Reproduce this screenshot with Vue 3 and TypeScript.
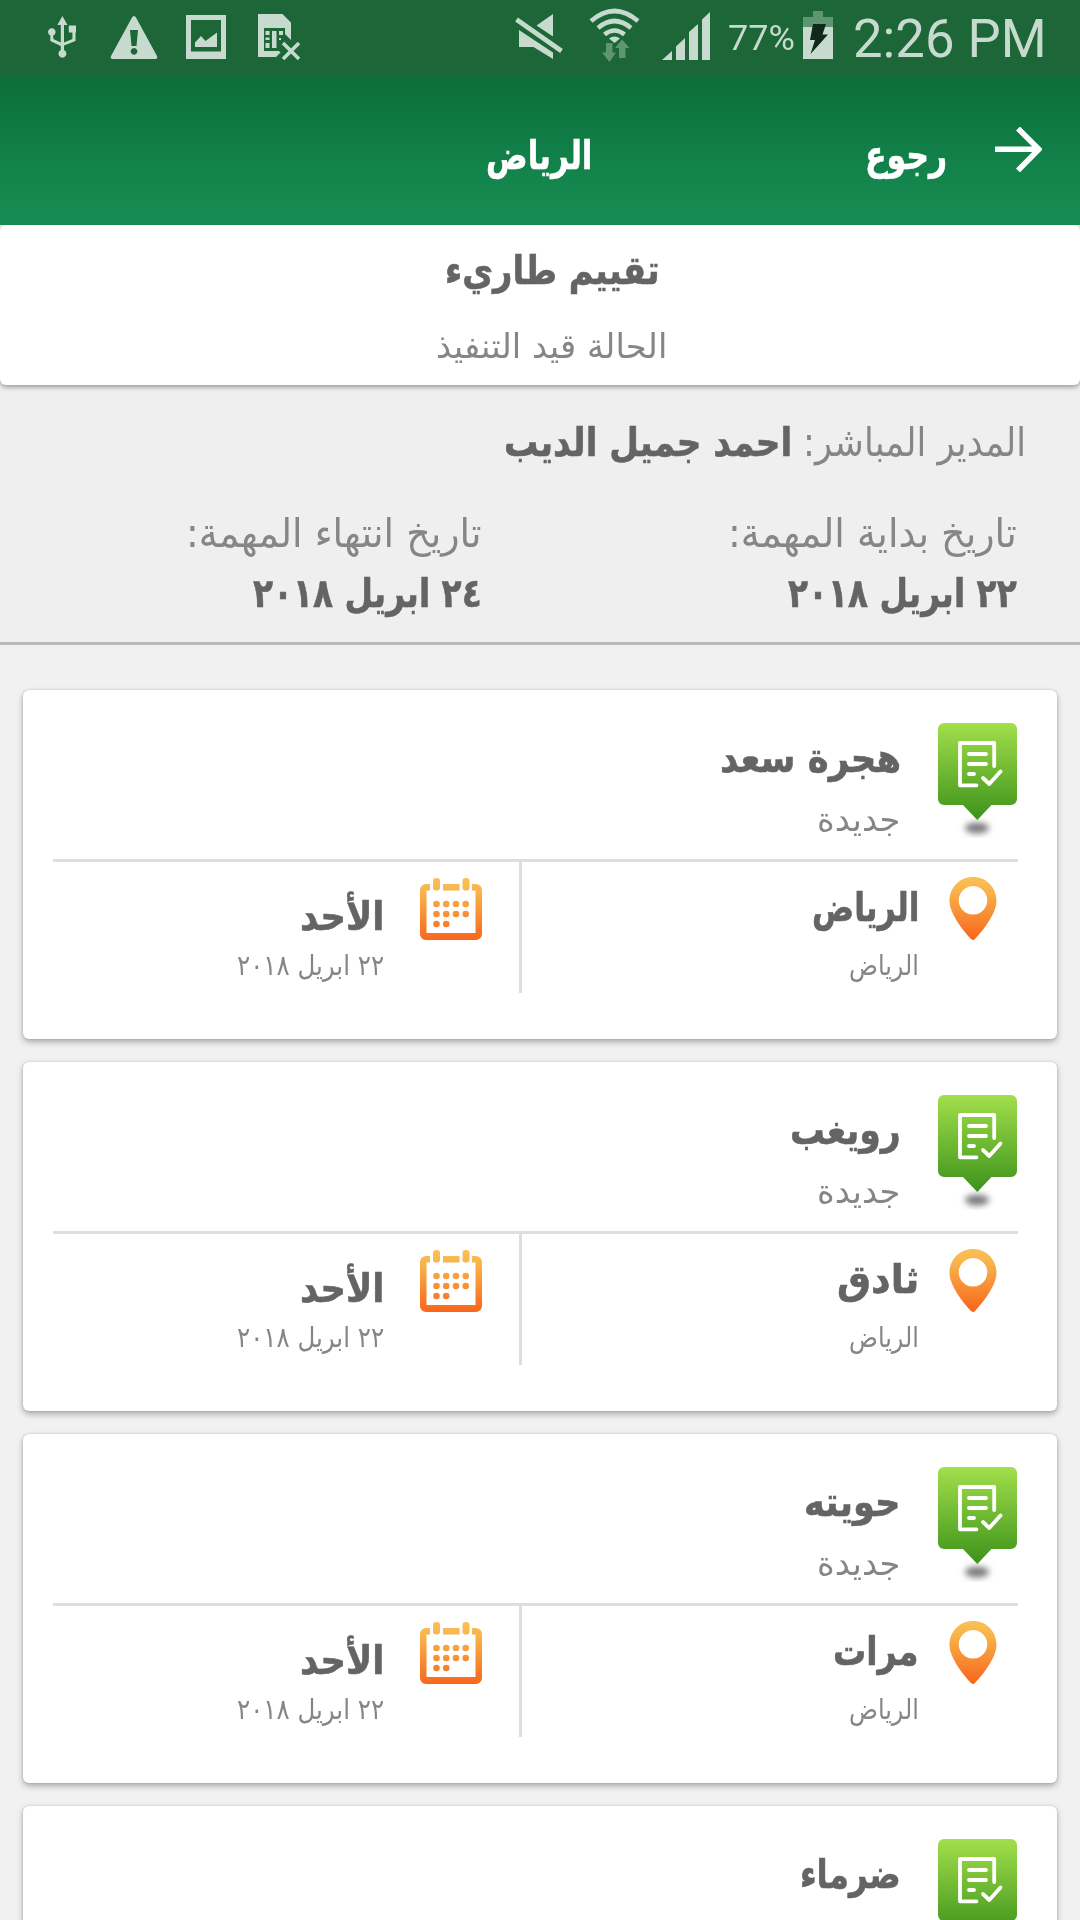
<script setup lang="ts">
import { defineComponent, h, onMounted, ref } from 'vue'

// Single line of text, condensed or widened to a given width.
const FitText = defineComponent({
  props: {
    text: { type: String, required: true },
    width: { type: Number, required: true },
    ltr: { type: Boolean, default: false },
  },
  setup(props) {
    const inner = ref<HTMLElement | null>(null)
    const scale = ref(1)
    onMounted(() => {
      if (inner.value) scale.value = props.width / inner.value.offsetWidth
    })
    return () =>
      h('span', { style: { display: 'block', flex: 'none', width: `${props.width}px`, whiteSpace: 'nowrap' } }, [
        h(
          'span',
          {
            ref: inner,
            style: {
              display: 'inline-block',
              transform: `scaleX(${scale.value})`,
              transformOrigin: props.ltr ? 'left' : 'right',
            },
          },
          props.text,
        ),
      ])
  },
})

interface Visit {
  name: string
  nameWidth: number
  details?: { state: string; city: string; cityWidth: number; region: string; day: string; date: string }
}

const common = { state: 'جديدة', region: 'الرياض', day: 'الأحد', date: '٢٢ ابريل ٢٠١٨' }

const visits: Visit[] = [
  { name: 'هجرة سعد', nameWidth: 181, details: { ...common, city: 'الرياض', cityWidth: 107 } },
  { name: 'رويغب', nameWidth: 111, details: { ...common, city: 'ثادق', cityWidth: 82 } },
  { name: 'حويته', nameWidth: 97, details: { ...common, city: 'مرات', cityWidth: 86 } },
  { name: 'ضرماء', nameWidth: 101 },
]

const dots = [
  [16.5, 26], [26.2, 26], [36, 26], [45.7, 26],
  [16.5, 36], [26.2, 36], [36, 36], [45.7, 36],
  [16.5, 46], [26.2, 46],
]
</script>

<template>
  <div class="screen">
    <svg width="0" height="0" class="defs">
      <defs>
        <linearGradient id="green" x1="0" y1="0" x2="0" y2="1">
          <stop offset="0" stop-color="#a2df4b" />
          <stop offset="1" stop-color="#3d921b" />
        </linearGradient>
        <linearGradient id="orange" gradientUnits="userSpaceOnUse" x1="0" y1="0" x2="0" y2="62">
          <stop offset="0" stop-color="#fac158" />
          <stop offset="0.25" stop-color="#f9b149" />
          <stop offset="1" stop-color="#f8661c" />
        </linearGradient>
        <filter id="soft" x="-50%" y="-100%" width="200%" height="300%">
          <feGaussianBlur stdDeviation="3" />
        </filter>
      </defs>
    </svg>

    <div class="status" dir="ltr">
      <svg width="310" height="76" viewBox="0 0 310 76" fill="#c6dacd">
        <path d="M62.4 16l-5 9h3.4v17.5l-7.5-3.500V35.500a3.800 3.800 0 1 0-3 0V41l10.500 5v4a4 4 0 1 0 3.200 0v-4.500L75.500 41V32.500H76V25.500h-7.200v7h3.600V39L64 42.500V25h3.500z" />
        <path fill-rule="evenodd" d="M134 16q1.200 0 2 1.500L157 56q1 3-1.500 3h-43q-2.500 0-1.500-3L132 17.500q.8-1.500 2-1.500zM130 30l1.500 16h5L138 30zM134 48a3.400 3.400 0 1 0 .01 0z" />
        <path fill-rule="evenodd" d="M186 15h40v44h-40zM191 20v31.500h30V20z" />
        <path d="M195 47v-4.500l6-6.500 4.500 5L217 32.500V47z" />
        <path fill-rule="evenodd" d="M258 14h24.500l8.500 8.500V40l-6-6V28h-21v23h15l1.500 1.500-4.500 4.500H258z" />
        <path d="M265.500 31h4v4h-4zM272 31h4.500v17H272zM279 31h4v4h-4zM265.500 37.500h4v2.500h-4zM265.500 43h4v5h-4zM279 38h2v2h-2z" />
        <path d="M283 43l16 16M299 43l-16 16" stroke="#c6dacd" stroke-width="3.600" fill="none" />
      </svg>
      <svg class="signals" width="200" height="76" viewBox="514 0 200 76" fill="#c6dacd">
        <path d="M553 14v22.500l-16.500-11zM519 30l34 22.500V59L533.500 47H519z" />
        <path d="M516.500 19.500L561.500 51" stroke="#c6dacd" stroke-width="4.800" fill="none" />
        <g fill="none" stroke="#c6dacd" stroke-width="4.600">
          <path d="M591 21q23.500-20 47 0" />
          <path d="M598 28q16.500-14 33 0" />
          <path d="M604.500 34.500q10-8 20 0" />
        </g>
        <path d="M609 38.500q5.500-4 11 0l-5.500 4.500z" />
        <path fill="#5f9672" d="M606 43h6.500v9.500h3.500L609.500 62 602 52.500h4zM619 58h6.500V48h4L622 39.500 615 48h4z" />
        <path d="M662 60l10-9v9zM676 60V46.500l9-8.500v22zM689 60V32l9-8v36zM702 60V19.500l8-7.500v48z" />
      </svg>
      <FitText class="percent" text="77%" :width="67" ltr />
      <svg class="battery" width="30" height="48" viewBox="0 0 30 48">
        <path fill="#5f9672" d="M10 0h10v6h10v10H0V6h10z" />
        <path fill="#c6dacd" d="M0 16h30v32H0z" />
        <path fill="#10291a" d="M10 13h13l-3.500 10.500h5.500L7.500 43l4.500-14H7z" />
      </svg>
      <FitText class="time" text="2:26 PM" :width="194" ltr />
    </div>

    <header class="bar">
      <svg class="back" width="47" height="45" viewBox="0 0 47 45">
        <path d="M0 22.300H43M23 1.500L43.800 22.300 23 43.500" fill="none" stroke="#fff" stroke-width="5.500" />
      </svg>
      <FitText class="strong" text="رجوع" :width="82" />
      <FitText class="strong bar-title" text="الرياض" :width="106" />
    </header>

    <section class="summary">
      <FitText class="strong" text="تقييم طاريء" :width="215" />
      <FitText class="state" text="الحالة قيد التنفيذ" :width="231" />
    </section>

    <section class="info">
      <div class="manager">
        <FitText class="label" text="المدير المباشر:" :width="223" />
        <FitText class="strong" text="احمد جميل الديب" :width="288" />
      </div>
      <div class="dates">
        <div class="date">
          <FitText class="label" text="تاريخ بداية المهمة:" :width="289" />
          <FitText class="strong value" text="٢٢ ابريل ٢٠١٨" :width="229" />
        </div>
        <div class="date">
          <FitText class="label" text="تاريخ انتهاء المهمة:" :width="296" />
          <FitText class="strong value" text="٢٤ ابريل ٢٠١٨" :width="229" />
        </div>
      </div>
    </section>

    <main class="list">
      <article v-for="visit in visits" :key="visit.name" class="card">
        <div class="top">
          <svg class="badge" width="79" height="115" viewBox="0 0 79 115">
            <ellipse cx="39" cy="105" rx="12" ry="5.500" fill="#7c797d" filter="url(#soft)" />
            <path fill="url(#green)" d="M6 0H73a6 6 0 0 1 6 6V76a6 6 0 0 1-6 6H53.500L39.300 97 25 82H6a6 6 0 0 1-6-6V6a6 6 0 0 1 6-6z" />
            <g fill="none" stroke="#fff" stroke-width="3.800" stroke-linecap="round" stroke-linejoin="round">
              <path d="M56.200 43V20H22v42.300h16.500" />
              <path d="M31 31h17M31 41h17M31 51h5M45 55l6.300 6L62.500 48.500" />
            </g>
          </svg>
          <div class="top-text">
            <FitText class="strong" :text="visit.name" :width="visit.nameWidth" />
            <FitText v-if="visit.details" class="new" :text="visit.details.state" :width="84" />
          </div>
        </div>
        <div v-if="visit.details" class="bottom">
          <div class="place">
            <svg width="48" height="63" viewBox="0 0 48 63">
              <path fill="url(#orange)" fill-rule="evenodd" d="M24 0C37.500 0 47.500 10.500 47.500 24 47.500 38 30 58 26 62Q24 63.800 22 62C18 58 .5 38 .5 24 .5 10.500 10.500 0 24 0zM24 9a14.300 14.300 0 1 0 .01 0z" />
            </svg>
            <div class="place-text">
              <FitText class="strong" :text="visit.details.city" :width="visit.details.cityWidth" />
              <FitText class="small" :text="visit.details.region" :width="70" />
            </div>
          </div>
          <div class="day">
            <svg width="62" height="62" viewBox="0 0 62 62" fill="url(#orange)">
              <path d="M6 6h4v6.500H6.500V55h49V12.500H52V6h4a6 6 0 0 1 6 6V56a6 6 0 0 1-6 6H6a6 6 0 0 1-6-6V12a6 6 0 0 1 6-6z" />
              <path d="M23 6h16.500v6.500H23z" />
              <rect x="13" y="0" width="7" height="12.500" rx="3" />
              <rect x="42.500" y="0" width="7" height="12.500" rx="3" />
              <circle v-for="dot in dots" :key="dot.join()" :cx="dot[0]" :cy="dot[1]" r="3.300" />
            </svg>
            <div class="day-text">
              <FitText class="strong" :text="visit.details.day" :width="84" />
              <FitText class="small" :text="visit.details.date" :width="147" />
            </div>
          </div>
        </div>
      </article>
    </main>
  </div>
</template>

<style>
body {
  margin: 0;
  overflow: hidden;
}
</style>

<style scoped>
.screen {
  width: 1080px;
  height: 1920px;
  overflow: hidden;
  background: #f1f1f1;
  font-family: 'DejaVu Sans', sans-serif;
  color: #868686;
  direction: rtl;
}
svg {
  display: block;
  flex: none;
}
.defs {
  position: absolute;
}
.status {
  display: flex;
  height: 76px;
  background: #1c6637;
  color: #c6dacd;
  font-family: Roboto, sans-serif;
  font-weight: 400;
  direction: ltr;
}
.signals {
  margin-left: 204px;
}
.percent {
  margin: 18px 0 0 14px;
  font-size: 35px;
  line-height: 41px;
}
.battery {
  margin: 11px 0 0 8px;
}
.time {
  margin: 7px 0 0 20px;
  font-size: 54px;
  line-height: 64px;
}
.bar {
  display: flex;
  box-sizing: border-box;
  height: 149px;
  padding: 55px 38px 0 0;
  background: linear-gradient(#0c6e3a, #12824a 60%, #188d54);
}
.back {
  margin: -4px 0 0 48px;
}
.bar .strong {
  color: #fff;
}
.bar-title {
  margin-right: 273px;
}
.strong {
  font-size: 40px;
  line-height: 48px;
  height: 48px;
  font-weight: 700;
  color: #646464;
  -webkit-text-stroke: 0.6px currentColor;
}
.label {
  font-size: 40px;
  line-height: 48px;
  height: 48px;
}
.summary {
  position: relative;
  display: flex;
  flex-direction: column;
  align-items: center;
  box-sizing: border-box;
  height: 160px;
  padding: 21px 0 0 24px;
  border-radius: 6px;
  background: #fff;
  box-shadow: 0 2px 5px rgba(0, 0, 0, 0.38);
}
.state {
  margin-top: 32px;
  font-size: 34px;
  line-height: 40px;
}
.info {
  box-sizing: border-box;
  height: 260px;
  padding-top: 33px;
  border-bottom: 3px solid #b8baba;
  background: #efefef;
}
.manager {
  display: flex;
  gap: 11px;
  padding-right: 54px;
}
.dates {
  display: flex;
  margin-top: 43px;
  padding-right: 63px;
}
.date {
  flex: none;
  width: 535px;
}
.value {
  margin-top: 12px;
}
.list {
  display: flex;
  flex-direction: column;
  gap: 23px;
  padding: 45px 23px 0;
}
.card {
  box-sizing: border-box;
  height: 349px;
  padding: 0 39px 0 30px;
  border-radius: 6px;
  background: #fff;
  box-shadow: 0 3px 6px rgba(0, 0, 0, 0.3), 0 0 2px rgba(0, 0, 0, 0.18);
}
.top {
  display: flex;
  box-sizing: border-box;
  height: 172px;
  padding-top: 33px;
  border-bottom: 3px solid #dedede;
}
.badge {
  margin-right: 1px;
}
.top-text {
  margin: 11px 37px 0 0;
}
.new {
  margin-top: 18px;
  font-size: 33px;
  line-height: 40px;
}
.bottom {
  display: flex;
}
.place {
  display: flex;
  box-sizing: border-box;
  width: 499px;
  height: 131px;
  padding: 15px 21px 0 0;
  border-left: 3px solid #dedede;
}
.place-text {
  margin: 6px 30px 0 0;
}
.day {
  display: flex;
  padding: 16px 37px 0 0;
}
.day-text {
  margin: 14px 36px 0 0;
}
.small {
  margin-top: 18px;
  font-size: 28px;
  line-height: 34px;
}
.day-text .small {
  margin-top: 9px;
}
</style>
